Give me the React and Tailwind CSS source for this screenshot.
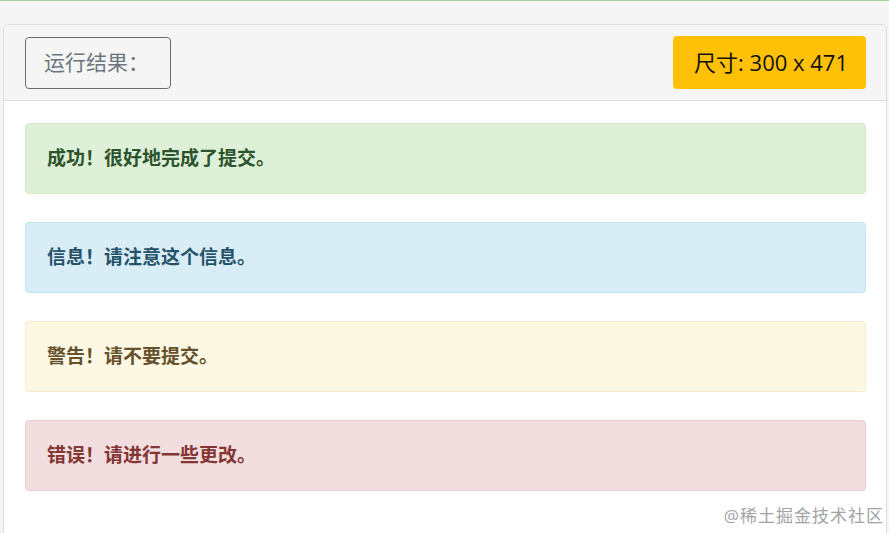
import React from 'react';

const alerts = [
  { title: '成功！', text: '很好地完成了提交。', box: 'bg-[#dff0d8] border-[#d6e9c6] text-[#2b542c]' },
  { title: '信息！', text: '请注意这个信息。', box: 'bg-[#d9edf7] border-[#bce8f1] text-[#245269]' },
  { title: '警告！', text: '请不要提交。', box: 'bg-[#fcf8e3] border-[#faebcc] text-[#66512c]' },
  { title: '错误！', text: '请进行一些更改。', box: 'bg-[#f2dede] border-[#ebccd1] text-[#843534]' },
];

const font = { fontFamily: '"Open Sans", "Noto Sans CJK SC", sans-serif' };

export default function App() {
  return (
    <div
      className="relative w-[889px] h-[533px] overflow-hidden bg-[#f5f5f6] border-t border-[#a9cf99]"
      style={font}
    >
      {/* Result panel */}
      <div className="mt-[23px] ml-[3px] w-[884px] h-[520px] bg-white border border-[#dddddd] rounded-t-[5px]">
        <div className="flex items-center justify-between h-[76px] pl-[21px] pr-[20px] bg-[#f5f5f5] border-b border-[#dddddd] rounded-t-[5px]">
          <div className="flex items-center h-[52px] pl-[18px] pr-[8px] w-[146px] border border-[#6c6c6c] rounded-[4px] text-[21px] text-[#6c757d]">
            运行结果：
          </div>
          <div className="flex items-center h-[53px] pl-[21px] pr-[18px] rounded-[4px] bg-[#ffc107] text-[22px] text-[#111]">
            尺寸: 300 x 471
          </div>
        </div>

        <div className="flex flex-col gap-[28px] pt-[22px] pl-[21px] pr-[20px]">
          {alerts.map((a, i) => (
            <div
              key={i}
              className={`flex items-center h-[71px] px-[21px] border rounded-[4px] text-[19px] font-bold ${a.box}`}
            >
              <span>{a.title}</span>
              <span>{a.text}</span>
            </div>
          ))}
        </div>
      </div>

      {/* Watermark */}
      <div className="absolute right-[5px] bottom-[5px] text-[17px] text-[#a3a3a3] tracking-[1px]">
        @稀土掘金技术社区
      </div>
    </div>
  );
}
